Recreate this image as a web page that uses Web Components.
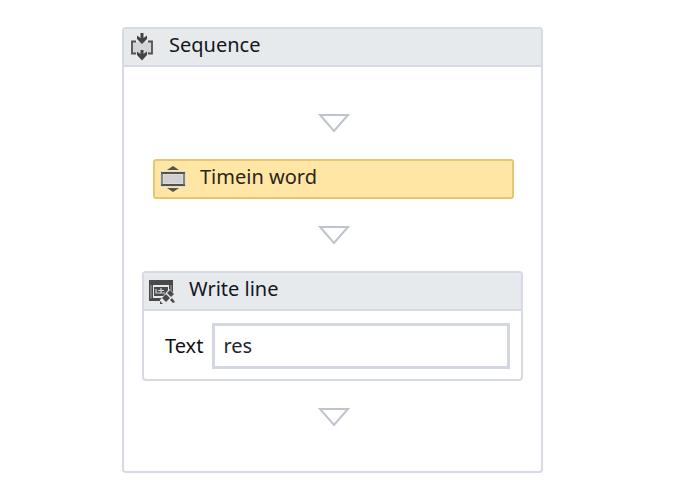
<!DOCTYPE html>
<html lang="en">
<head>
<meta charset="utf-8">
<title>Workflow</title>
<style>
body { margin: 0; background: #fff; color: #15161c; font: 20px/28px "Noto Sans", "Open Sans", sans-serif; }
</style>
</head>
<body>
<workflow-canvas>
  <activity-card heading="Sequence">
    <sequence-icon slot="icon"></sequence-icon>
    <flow-sequence>
      <flow-arrow></flow-arrow>
      <activity-pill>
        <activity-icon slot="icon"></activity-icon>
        Timein word
      </activity-pill>
      <flow-arrow></flow-arrow>
      <activity-card heading="Write line">
        <write-icon slot="icon"></write-icon>
        <text-field label="Text" value="res"></text-field>
      </activity-card>
      <flow-arrow></flow-arrow>
    </flow-sequence>
  </activity-card>
</workflow-canvas>
<script>
function define(name, html) {
  const template = document.createElement("template");
  template.innerHTML = html;
  customElements.define(name, class extends HTMLElement {
    constructor() {
      super();
      this.attachShadow({ mode: "open" }).append(template.content.cloneNode(true));
    }
    connectedCallback() {
      const root = this.shadowRoot;
      const heading = root.querySelector("h2");
      const label = root.querySelector("label");
      const input = root.querySelector("input");
      if (heading) heading.textContent = this.getAttribute("heading");
      if (label) label.textContent = this.getAttribute("label");
      if (input) input.value = this.getAttribute("value");
    }
  });
}

define("workflow-canvas", `
<style>:host { display: block; padding: 27px 152px 22px 122px; }</style>
<slot></slot>`);

define("activity-card", `
<style>
:host { display: block; border: 2px solid #d6dae5; border-radius: 4px; background: #fff; overflow: hidden; }
header { display: flex; align-items: center; gap: 14px; height: 36px; padding: 0 5px; background: #e6eaed; border-bottom: 2px solid #d6dae5; }
h2 { margin: 0; padding-bottom: 4px; font: inherit; }
::slotted([slot="icon"]) { flex: none; }
</style>
<header><slot name="icon"></slot><h2></h2></header>
<slot></slot>`);

define("flow-sequence", `
<style>:host { display: flex; flex-direction: column; padding: 20px 18px 18px; }</style>
<slot></slot>`);

define("activity-pill", `
<style>
:host { display: flex; align-items: center; gap: 14px; box-sizing: border-box; height: 40px; margin: 0 9px 0 11px; padding: 0 5px; border: 2px solid #e6c673; border-radius: 3px; background: #ffe6a4; color: #2b2518; }
span { padding-bottom: 4px; }
</style>
<slot name="icon"></slot><span><slot></slot></span>`);

define("flow-arrow", `
<style>
:host { display: flex; justify-content: center; align-items: center; height: 72px; padding-left: 2px; }
svg { display: block; }
</style>
<svg width="32" height="20" viewBox="0 0 32 20" aria-hidden="true"><path d="M2 2H30L16 18Z" fill="#fff" stroke="#bfc3d0" stroke-width="2"/></svg>`);

define("text-field", `
<style>
:host { display: flex; align-items: center; gap: 9px; padding: 12px 11px 10px 21px; }
label { color: #111; }
input { flex: 1; min-width: 0; box-sizing: border-box; height: 46px; padding: 0 8px 2px; border: 3px solid #d3d7e3; border-radius: 0; background: #fff; color: #22242e; font: inherit; outline: none; }
</style>
<label for="value"></label><input id="value" type="text">`);

const iconStyle = `<style>:host { display: block; } svg { display: block; }</style>`;

define("sequence-icon", iconStyle + `
<svg width="26" height="30" viewBox="0 0 26 30" aria-hidden="true">
  <path d="M4 10H22V22H4Z" fill="#d3d5d6"/>
  <path d="M7 9.500H3V21.500H7M19 9.500H23V21.500H19" fill="none" stroke="#505050" stroke-width="1.800"/>
  <path d="M11.500 1H14.500V6L18 3.500V7L13 12L8 7V3.500L11.500 6ZM11.500 18H14.500V22L18 19.500V23L13 28.500L8 23V19.500L11.500 22Z" fill="#444"/>
</svg>`);

define("activity-icon", iconStyle + `
<svg width="26" height="30" viewBox="0 0 26 30" aria-hidden="true">
  <path d="M13 2L19 6H7ZM13 28L7 24H19Z" fill="#55534d"/>
  <path d="M0 7H26V23H0Z" fill="#dddcd6"/>
  <path d="M1 9H25M1 21H25" stroke="#55534d" stroke-width="2"/>
  <path d="M2 9V21M24 9V21" stroke="#6b6961" stroke-width="1.500"/>
  <path d="M4 11H22V19H4Z" fill="#d0d0d0"/>
</svg>`);

define("write-icon", iconStyle + `
<svg width="26" height="30" viewBox="0 0 26 30" aria-hidden="true">
  <path d="M0 4H24V16L20 20V9H4V22H13V25H0Z" fill="#4a4a4a"/>
  <path d="M2 9V22.500M22 9V16" stroke="#a5a7a8"/>
  <path d="M5 11H19V16L15 20H5Z" fill="#4a4a4a"/>
  <path d="M7 13V17H16M12 12V17M9 14.500H15" fill="none" stroke="#d5d8da" stroke-width="1.200"/>
  <path d="M11 24L20 13L26 18L17 28L11 29Z" fill="#e6eaed"/>
  <path d="M13 22L17 18L21 22L17 26ZM18 17L21 14L25 18L22 21ZM11 25L14 28L11 28ZM21 24L23 22L26 26L24 27Z" fill="#4a4a4a"/>
</svg>`);
</script>
</body>
</html>
